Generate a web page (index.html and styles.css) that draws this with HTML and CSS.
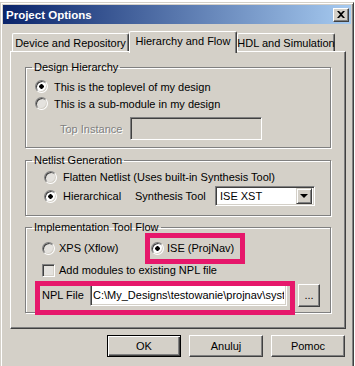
FILE: index.html
```html
<!DOCTYPE html>
<html lang="en">
<head>
    <meta charset="UTF-8">
    <title>Project Options</title>
    <link rel="stylesheet" href="styles.css">
</head>
<body>
    <div class="window">
        <div class="titlebar">
            <span class="title">Project Options</span>
            <button class="close">
                <svg width="8" height="7" viewBox="0 0 8 7"><path d="M0 0h2l2 2 2-2h2L5 3.5 8 7H6L4 5 2 7H0l3-3.5z" fill="#000"/></svg>
            </button>
        </div>

        <div class="tabs">
            <div class="tab tab-device">Device and Repository</div>
            <div class="tab tab-flow active">Hierarchy and Flow</div>
            <div class="tab tab-hdl">HDL and Simulation</div>
        </div>

        <div class="panel">
            <fieldset class="group design">
                <legend>Design Hierarchy</legend>
                <div class="rows">
                    <label class="row opt"><input type="radio" name="hier" checked>This is the toplevel of my design</label>
                    <label class="row opt"><input type="radio" name="hier">This is a sub-module in my design</label>
                    <div class="row instance-row">
                        <span class="muted">Top Instance</span>
                        <input class="field instance" type="text" disabled>
                    </div>
                </div>
            </fieldset>

            <fieldset class="group netlist">
                <legend>Netlist Generation</legend>
                <div class="rows">
                    <label class="row row-18 opt"><input type="radio" name="net">Flatten Netlist (Uses built-in Synthesis Tool)</label>
                    <div class="row row-20">
                        <label class="opt hier-opt"><input type="radio" name="net" checked>Hierarchical</label>
                        <span class="synth-label">Synthesis Tool</span>
                        <div class="select">
                            <span class="select-text">ISE XST</span>
                            <span class="select-btn"><i class="arrow"></i></span>
                        </div>
                    </div>
                </div>
            </fieldset>

            <fieldset class="group impl">
                <legend>Implementation Tool Flow</legend>
                <div class="rows">
                    <div class="row row-20">
                        <label class="opt xps-opt"><input type="radio" name="flow">XPS (Xflow)</label>
                        <label class="opt ise-opt"><input type="radio" name="flow" checked>ISE (ProjNav)<span class="mark mark-ise"></span></label>
                    </div>
                    <label class="row row-18 opt check-row"><input type="checkbox">Add modules to existing NPL file</label>
                    <div class="row npl-row">
                        <span class="npl-label">NPL File</span>
                        <input class="field npl" type="text" value="C:\My_Designs\testowanie\projnav\syst">
                        <button class="btn browse">...</button>
                        <span class="mark mark-npl"></span>
                    </div>
                </div>
            </fieldset>
        </div>

        <div class="actions">
            <button class="btn default">OK</button>
            <button class="btn">Anuluj</button>
            <button class="btn">Pomoc</button>
        </div>
    </div>
</body>
</html>
```

FILE: styles.css
```css
body {
    margin: 0;
    background-color: #fff;
    font-family: "Liberation Sans", Arial, sans-serif;
    font-size: 11px;
    color: #000;
    overflow: hidden;
}

.window {
    width: 354px;
    height: 370px;
    margin-top: 2px;
    box-sizing: border-box;
    padding: 2px;
    background-color: #d4d0c8;
    border: 1px solid;
    border-color: #d4d0c8 #404040 #404040 #d4d0c8;
    box-shadow: inset 1px 1px #fff, inset -1px -1px #808080;
}

.titlebar {
    height: 19px;
    display: flex;
    align-items: center;
    justify-content: space-between;
    padding: 0 2px 0 3px;
    background: linear-gradient(to right, #0a246a, #a6caf0);
}

.title {
    color: #fff;
    font-weight: bold;
    font-size: 11.5px;
}

.close {
    width: 16px;
    height: 14px;
    padding: 0;
    display: flex;
    align-items: center;
    justify-content: center;
    background-color: #d4d0c8;
    border: 1px solid;
    border-color: #fff #404040 #404040 #fff;
    box-shadow: inset -1px -1px #808080;
}

/* tabs */
.tabs {
    display: flex;
    align-items: flex-end;
    height: 20px;
    margin-top: 7px;
    padding-left: 9px;
}

.tab {
    height: 18px;
    box-sizing: border-box;
    display: flex;
    align-items: center;
    justify-content: center;
    border: 1px solid;
    border-bottom: none;
    border-color: #fff #404040 #fff #fff;
    border-radius: 2px 2px 0 0;
    box-shadow: inset -1px 0 #808080;
    white-space: nowrap;
}

.tab-device { width: 117px; }
.tab-flow { width: 108px; }
.tab-hdl { width: 98px; }

.tab.active {
    height: 22px;
    margin-bottom: -2px;
    padding-bottom: 3px;
    position: relative;
    z-index: 1;
    background-color: #d4d0c8;
}

.panel {
    width: 336px;
    margin-left: 7px;
    box-sizing: border-box;
    padding: 0 0 15px 14px;
    border: 1px solid;
    border-color: #fff #404040 #404040 #fff;
    box-shadow: inset -1px -1px #808080;
}

/* group boxes */
.group {
    width: 306px;
    min-width: 0;
    box-sizing: border-box;
    margin: 0;
    padding: 0;
    border: 1px solid #808080;
    box-shadow: 1px 1px #fff, inset 1px 1px #fff;
}

.group legend {
    margin-left: 6px;
    padding: 0 2px;
    line-height: 14px;
}

.design { margin-top: 8px; }
.netlist { margin-top: 5px; }
.impl { margin-top: 4px; }

.design .rows { padding: 4px 0 7px 9px; }
.netlist .rows { padding: 1px 0 9px 18px; }
.impl .rows { padding: 4px 0 5px 16px; }

.row {
    display: flex;
    align-items: center;
    height: 17px;
}

.row-18 { height: 18px; }
.row-20 { height: 20px; }

.opt {
    display: flex;
    align-items: center;
    white-space: nowrap;
}

.row-20 .opt { height: 100%; }

input[type="radio"], input[type="checkbox"] {
    appearance: none;
    -webkit-appearance: none;
    width: 13px;
    height: 13px;
    margin: 0 6px 0 0;
    box-sizing: border-box;
    border: 1px solid;
    border-color: #808080 #fff #fff #808080;
    box-shadow: inset 1px 1px #404040, inset -1px -1px #d4d0c8;
    background-color: #e4e2de;
}

input[type="radio"] {
    border-radius: 50%;
}

input[type="radio"]:checked {
    background: radial-gradient(circle, #000 0 2px, #fff 2.5px);
}

.field {
    height: 23px;
    box-sizing: border-box;
    margin: 0;
    padding: 0 2px;
    font: inherit;
    color: #000;
    background-color: #fff;
    border: 1px solid;
    border-color: #808080 #fff #fff #808080;
    box-shadow: inset 1px 1px #404040, inset -1px -1px #d4d0c8;
    outline: none;
}

.instance-row {
    height: 23px;
    margin-top: 5px;
}

.muted {
    width: 70px;
    margin-left: 25px;
    color: #808080;
    text-shadow: 1px 1px #fff;
}

.instance {
    width: 132px;
    background-color: #d4d0c8;
}

.hier-opt { width: 91px; }

.synth-label { width: 80px; }

.select {
    width: 100px;
    height: 20px;
    box-sizing: border-box;
    display: flex;
    align-items: center;
    justify-content: space-between;
    background-color: #fff;
    border: 1px solid;
    border-color: #808080 #fff #fff #808080;
    box-shadow: inset 1px 1px #404040, inset -1px -1px #d4d0c8;
    padding: 2px;
}

.select-text { padding-left: 2px; }

.select-btn {
    width: 16px;
    height: 16px;
    box-sizing: border-box;
    display: flex;
    align-items: center;
    justify-content: center;
    background-color: #d4d0c8;
    border: 1px solid;
    border-color: #d4d0c8 #404040 #404040 #d4d0c8;
    box-shadow: inset 1px 1px #fff, inset -1px -1px #808080;
}

.arrow {
    border-left: 4px solid transparent;
    border-right: 4px solid transparent;
    border-top: 4px solid #000;
}

.xps-opt { width: 109px; }
.xps-opt input { margin-right: 4px; }

.ise-opt { position: relative; }
.ise-opt input { margin-right: 3px; }

.check-row { margin-top: 3px; }
.check-row input { margin-right: 4px; }

.npl-row {
    position: relative;
    height: 24px;
    margin-top: 4px;
}

.npl-label { width: 48px; }

.npl {
    width: 197px;
    height: 22px;
}

/* red marker boxes drawn on the screenshot */
.mark {
    position: absolute;
    box-sizing: border-box;
    border: 5px solid #e6176b;
}

.mark-ise {
    left: -6px;
    top: -5px;
    width: 100px;
    height: 31px;
}

.mark-npl {
    left: -7px;
    top: -2px;
    width: 260px;
    height: 34px;
}

/* buttons */
.btn {
    width: 74px;
    height: 22px;
    padding: 0;
    font: inherit;
    color: #000;
    background-color: #d4d0c8;
    border: 1px solid;
    border-color: #fff #404040 #404040 #fff;
    box-shadow: inset -1px -1px #808080;
}

.btn.default {
    border-color: #000;
    box-shadow: inset 1px 1px #fff, inset -1px -1px #404040, inset -2px -2px #808080;
}

.browse {
    width: 22px;
    height: 23px;
    margin-left: 11px;
}

.actions {
    display: flex;
    justify-content: flex-end;
    gap: 8px;
    margin-top: 6px;
    padding-right: 6px;
}
```
